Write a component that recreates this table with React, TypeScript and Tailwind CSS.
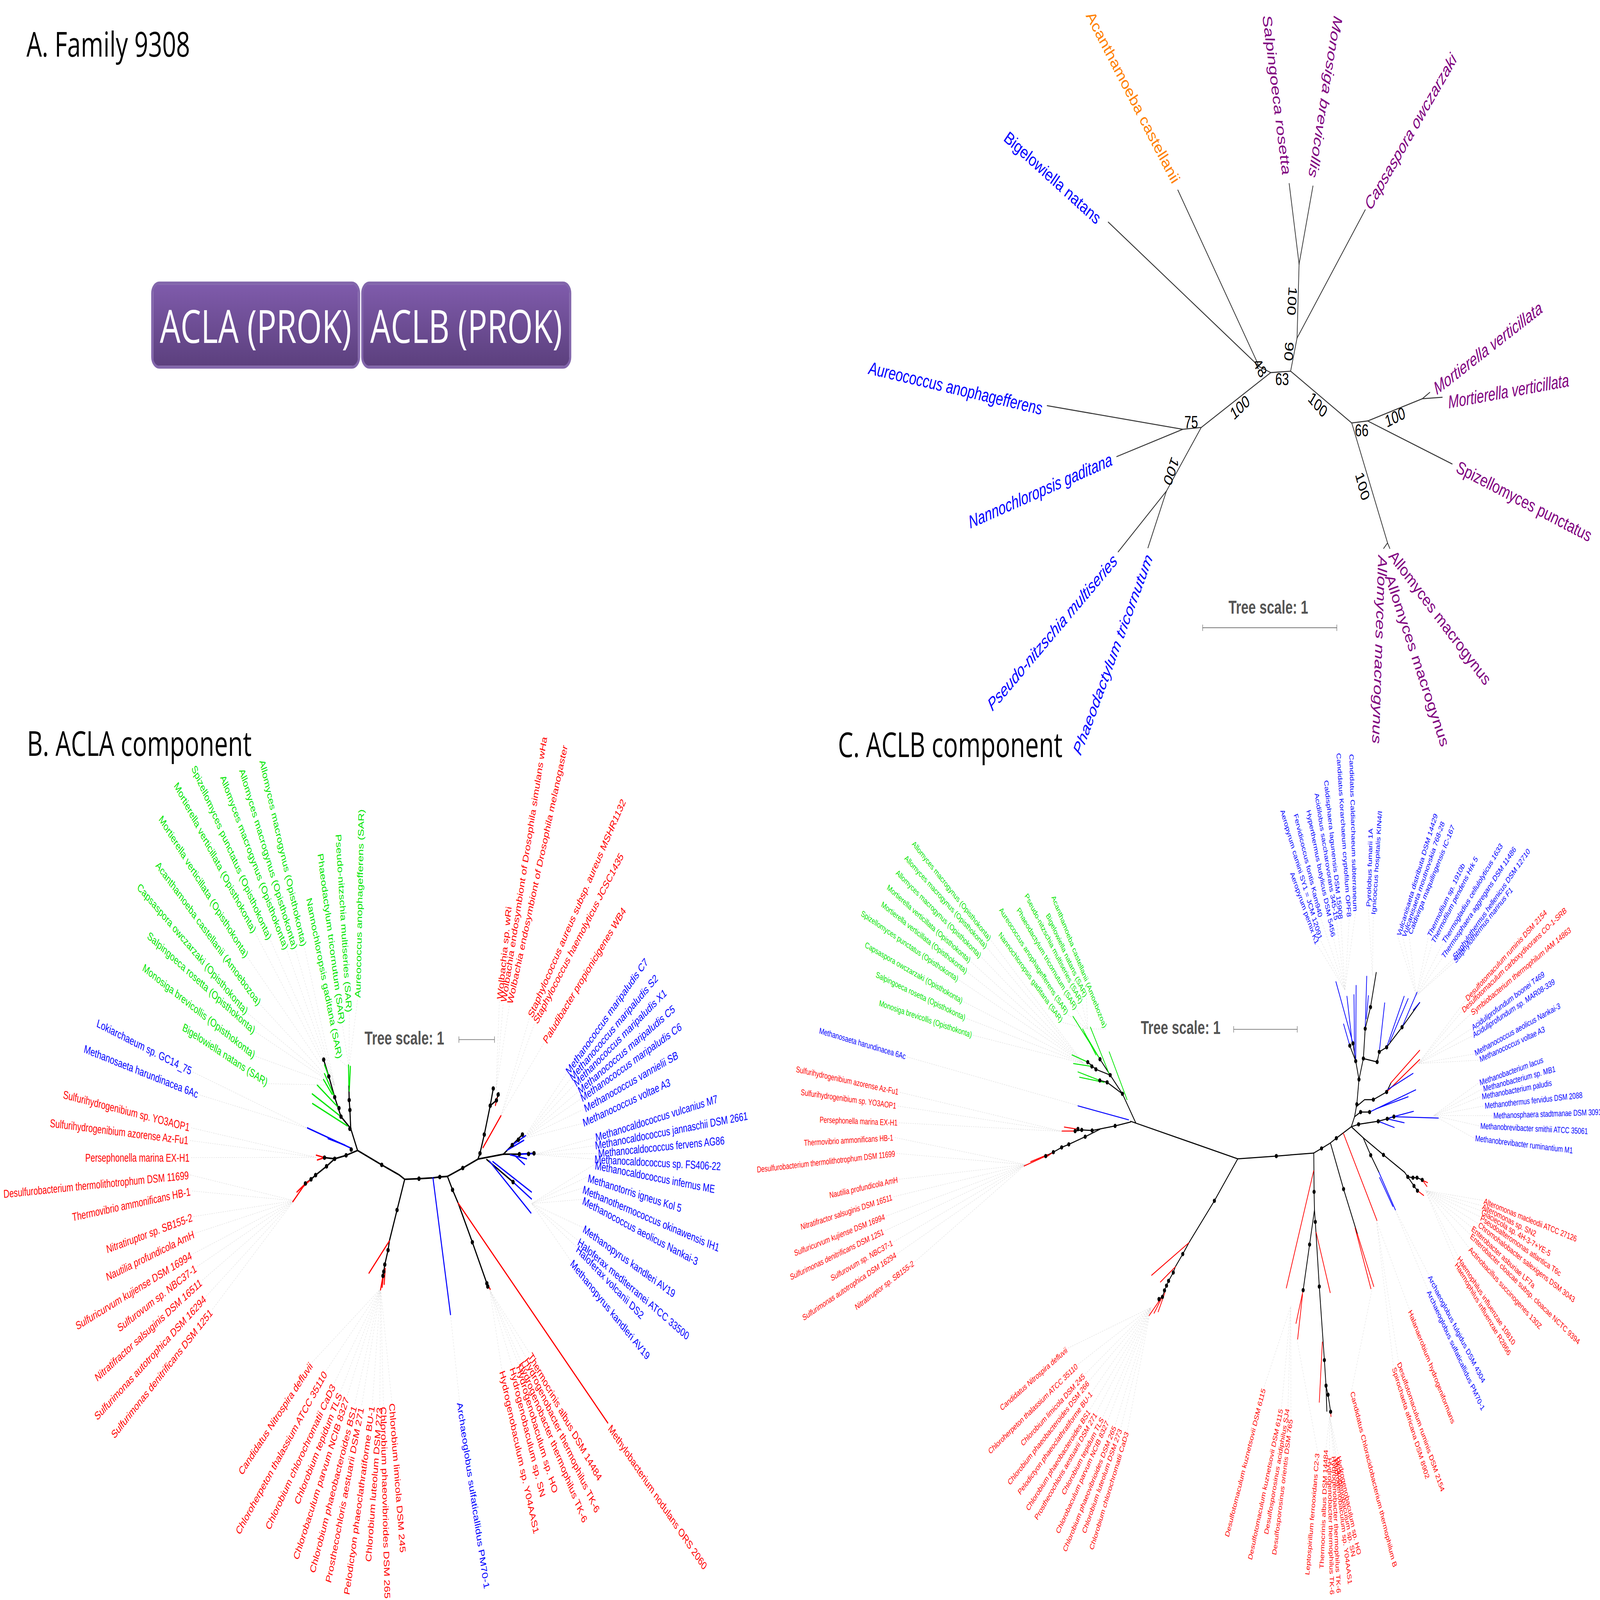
import React, { useEffect, useState } from "react";

// trees are drawn in the 1568 x 1109 units of the reduced figure
const S = 7016 / 1568;
const K = "#000000";
const RED = "#ff0000";
const BLUE = "#0000ff";
const GREEN = "#00e600";
const PURPLE = "#800080";
const ORANGE = "#ff7f00";

type Pt = [number, number];
type Edge = [Pt[], string];
type Lab = [string, number, number, number, "s" | "e", string, number];

const pts = (p: Pt[]) => p.map((q) => q.join(",")).join(" ");

function Edges({ edges, w, ink = K }: { edges: Edge[]; w: number; ink?: string }) {
  return (
    <g fill="none" strokeLinecap="round" strokeLinejoin="round">
      {edges.map(([p, c], i) => (
        <polyline key={i} points={pts(p)} stroke={c === K ? ink : c} strokeWidth={c === K ? w : w * 0.9} />
      ))}
    </g>
  );
}

function Dots({ dots, r }: { dots: Pt[]; r: number }) {
  return (
    <g fill="#000">
      {dots.map(([x, y], i) => (
        <circle key={i} cx={x} cy={y} r={r} />
      ))}
    </g>
  );
}

function Leaders({ items, hubs }: { items: Lab[]; hubs: Pt[] }) {
  return (
    <g stroke="#dadada" strokeWidth={0.3} strokeDasharray="1.2 1">
      {items.map(([, x, y, a, an, , h], i) => {
        if (h < 0) return null;
        const r = (a * Math.PI) / 180;
        const d = an === "e" ? 1.5 : -1.5;
        return <line key={i} x1={x + Math.cos(r) * d} y1={y + Math.sin(r) * d} x2={hubs[h][0]} y2={hubs[h][1]} />;
      })}
    </g>
  );
}

function Labels({ items, size, italic }: { items: Lab[]; size: number; italic?: boolean }) {
  return (
    <g>
      {items.map(([t, x, y, a, an, c], i) => (
        <text
          key={i}
          transform={`translate(${x} ${y}) rotate(${a})`}
          textAnchor={an === "e" ? "end" : "start"}
          dominantBaseline="central"
          fill={c}
          fontSize={size}
          fontStyle={italic ? "italic" : undefined}
        >
          {t}
        </text>
      ))}
    </g>
  );
}

function Scale({ tx, ty, x1, x2, y }: { tx: number; ty: number; x1: number; x2: number; y: number }) {
  return (
    <g>
      <text x={tx} y={ty} textAnchor="middle" dominantBaseline="central" fontSize={13} fontWeight={700} fill="#555">
        Tree scale: 1
      </text>
      <g stroke="#777" strokeWidth={0.5}>
        <line x1={x1} y1={y} x2={x2} y2={y} />
        <line x1={x1} y1={y - 2.2} x2={x1} y2={y + 2.2} />
        <line x1={x2} y1={y - 2.2} x2={x2} y2={y + 2.2} />
      </g>
    </g>
  );
}

/* ---------- panel A tree ---------- */

const topEdges: Edge[] = [
  [[[1086.1, 153.9], [1234, 254], [1245.3, 258.2]], K],
  [[[1154.3, 131.7], [1234, 254]], K],
  [[[1245.3, 258.2], [1264.8, 257.2]], K],
  [[[1263.4, 127.2], [1273.1, 183]], K],
  [[[1286.7, 128.9], [1273.1, 183]], K],
  [[[1273.1, 183], [1271.1, 234.3], [1264.8, 257.2]], K],
  [[[1337.9, 145.4], [1271.1, 234.3]], K],
  [[[1264.8, 257.2], [1324.7, 293.1], [1340.3, 291.7]], K],
  [[[1340.3, 291.7], [1393.9, 276.3], [1401.2, 271.9]], K],
  [[[1393.9, 276.3], [1413.4, 275.3]], K],
  [[[1340.3, 291.7], [1423.1, 321.5]], K],
  [[[1324.7, 293.1], [1359.8, 376.2]], K],
  [[[1359.8, 376.2], [1362, 380]], K],
  [[[1359.8, 376.2], [1356, 380]], K],
  [[[1245.3, 258.2], [1177.2, 296.2], [1159.1, 297.5]], K],
  [[[1026.2, 281.1], [1159.1, 297.5]], K],
  [[[1094.4, 316.4], [1159.1, 297.5]], K],
  [[[1177.2, 296.2], [1143.1, 340.3]], K],
  [[[1095.8, 382.4], [1143.1, 340.3]], K],
  [[[1125, 379.6], [1143.1, 340.3]], K],
];

const topLabels: Lab[] = [
  ["Acanthamoeba castellanii", 1152.8, 125.9, 54, "e", ORANGE, -1],
  ["Bigelowiella natans", 1077, 152.5, 32.8, "e", BLUE, -1],
  ["Salpingoeca rosetta", 1261, 121, 80, "e", PURPLE, -1],
  ["Monosiga brevicollis", 1286.5, 123, 102.6, "e", PURPLE, -1],
  ["Capsaspora owczarzaki", 1340, 143.6, -51, "s", PURPLE, -1],
  ["Mortierella verticillata", 1406, 270, -29, "s", PURPLE, -1],
  ["Mortierella verticillata", 1419.2, 278.7, -7.4, "s", PURPLE, -1],
  ["Spizellomyces punctatus", 1428, 323, 20.4, "s", PURPLE, -1],
  ["Allomyces macrogynus", 1363.7, 383, 43.4, "s", PURPLE, -1],
  ["Allomyces macrogynus", 1361.3, 398.4, 65, "s", PURPLE, -1],
  ["Allomyces macrogynus", 1355, 385, 92.6, "s", PURPLE, -1],
  ["Aureococcus anophagefferens", 1021.3, 283.2, 9.5, "e", BLUE, -1],
  ["Nannochloropsis gaditana", 1089.5, 318, -17.5, "e", BLUE, -1],
  ["Pseudo-nitzschia multiseries", 1092.9, 386.5, -40, "e", BLUE, -1],
  ["Phaeodactylum tricornutum", 1126, 384.8, -62.7, "e", BLUE, -1],
];

const boot: [string, number, number, number][] = [
  ["48", 1235, 254.8, 55],
  ["63", 1256.5, 262.7, 0],
  ["90", 1263.3, 243.5, 95],
  ["100", 1266.3, 208.6, 95],
  ["100", 1291.6, 280.4, 40],
  ["66", 1334.5, 298.2, 0],
  ["100", 1367.1, 289, -20],
  ["100", 1335.4, 336.9, 70],
  ["100", 1215.1, 282.2, -35],
  ["75", 1167.4, 292.4, 0],
  ["100", 1147.9, 326.6, 115],
];

/* ---------- panel B tree ---------- */

const bEdges: Edge[] = [
  [[[350.4, 797.2], [339.2, 800.6], [328, 803], [318, 802.2]], K],
  [[[318, 802.2], [310, 800.5]], RED],
  [[[318, 802.2], [311, 803.8]], RED],
  [[[328, 803], [320, 808.2], [309.3, 814.3], [304.8, 817.2], [299.3, 820.1]], K],
  [[[299.3, 820.1], [287, 832.7]], RED],
  [[[301, 819], [291, 826]], RED],
  [[[304.8, 817.2], [296, 823]], RED],
  [[[350.4, 797.2], [343.7, 782], [342.9, 769.2], [342.2, 762.3], [341.9, 752]], K],
  [[[341.9, 752], [341.5, 738]], GREEN],
  [[[342.3, 756], [343.4, 739]], GREEN],
  [[[343.7, 782], [334.2, 773.8], [328, 760.3], [322.2, 745.9], [317.2, 734.3]], K],
  [[[340.4, 780.2], [306.3, 764.7]], GREEN],
  [[[334.2, 773.8], [306, 758]], GREEN],
  [[[332.2, 767.9], [311, 752]], GREEN],
  [[[328, 760.3], [318, 744]], GREEN],
  [[[325.5, 758.3], [317, 748]], GREEN],
  [[[322.2, 745.9], [318, 738]], GREEN],
  [[[344.5, 795.8], [301.3, 781.6]], BLUE],
  [[[338, 793.5], [321.5, 789]], BLUE],
  [[[350.4, 797.2], [374.1, 807.2], [391.1, 814.1], [396.6, 817.2], [410.6, 816.8], [424.3, 816.2], [431, 815.6], [438.5, 815.2], [453.5, 809.4], [468.4, 803.2]], K],
  [[[396.6, 817.2], [389.1, 838.5], [381.6, 859.9], [380.3, 866.3], [377.1, 876.3], [376.1, 881.2], [375.3, 884.1]], K],
  [[[375.3, 884.1], [372.9, 893.8]], RED],
  [[[376, 882], [374.5, 892]], RED],
  [[[377.5, 879], [376.5, 890]], RED],
  [[[381.6, 859.9], [361.6, 882.2]], RED],
  [[[424.3, 816.2], [441.5, 910.9]], BLUE],
  [[[438.5, 815.2], [443.5, 824.5], [449, 833.7], [462.9, 860.8], [477.1, 889.3]], K],
  [[[477.1, 889.3], [480.4, 893.4]], RED],
  [[[449, 833.7], [595.6, 986]], RED],
  [[[468.4, 803.2], [470.4, 799.2], [474.6, 786.2], [480.4, 766.2], [483.4, 754.3]], K],
  [[[480.4, 766.2], [486.5, 762.5], [488.8, 757.3]], K],
  [[[487, 761], [485.5, 766]], RED],
  [[[473.4, 795.2], [490.9, 773.2]], RED],
  [[[468.4, 803.2], [493.4, 799.8]], K],
  [[[493.4, 799.8], [502, 793.5], [512, 786.2]], K],
  [[[497, 797], [513.3, 790.2]], BLUE],
  [[[502, 793.5], [515, 787]], BLUE],
  [[[493.4, 799.8], [509, 799.8], [523.3, 799.2]], K],
  [[[500, 800.2], [516, 803]], BLUE],
  [[[509, 799.8], [524.5, 799.3]], BLUE],
  [[[505, 801], [514, 807]], BLUE],
  [[[477, 803.5], [502.8, 819.1]], K],
  [[[483, 805], [520.8, 826]], BLUE],
  [[[502.8, 819.1], [520.8, 830.8]], BLUE],
  [[[479.6, 804.6], [520.3, 840.5]], BLUE],
];

const bDots: Pt[] = [
  [374.1, 807.2], [410.6, 816.8], [431, 815.6], [453.5, 809.4], [389.1, 838.5], [380.3, 866.3], [377.1, 876.3],
  [376.1, 881.2], [375.3, 884.1], [443.5, 824.5], [462.9, 860.8], [477.1, 889.3], [478, 891.5], [470.4, 799.2],
  [474.6, 786.2], [480.4, 766.2], [483.4, 754.3], [486.5, 762.5], [488.2, 758.5], [502, 793.5], [508, 789.8],
  [512, 786.2], [509, 799.8], [518, 799.6], [523.3, 799.2], [502.8, 819.1], [339.2, 800.6], [328, 803],
  [318, 802.2], [320, 808.2], [309.3, 814.3], [304.8, 817.2], [299.3, 820.1], [344.2, 796.6], [342.9, 782.2],
  [342.9, 769.2], [342.2, 762.3], [334.2, 773.8], [328, 760.3], [322.2, 745.9], [317.2, 734.3], [332.2, 767.9],
];

const bHubs: Pt[] = [
  [328, 752], [342, 740], [302, 782], [310, 802], [288, 832], [373, 893], [441.5, 911], [480, 894], [0, 0],
  [521, 834], [486, 756], [491, 773], [513, 789], [524, 800],
];

const bLabels: Lab[] = [
  ["Allomyces macrogynus (Opisthokonta)", 298, 655.5, 72.3, "e", GREEN, 0],
  ["Allomyces macrogynus (Opisthokonta)", 289.3, 657.5, 67.2, "e", GREEN, 0],
  ["Allomyces macrogynus (Opisthokonta)", 280.6, 657.5, 62.5, "e", GREEN, 0],
  ["Spizellomyces punctatus (Opisthokonta)", 264.4, 650.5, 58, "e", GREEN, 0],
  ["Mortierella verticillata (Opisthokonta)", 249.4, 645.5, 53.1, "e", GREEN, 0],
  ["Mortierella verticillata (Opisthokonta)", 241.9, 662.5, 48.7, "e", GREEN, 0],
  ["Acanthamoeba castellanii (Amoebozoa)", 254.4, 695.4, 44.1, "e", GREEN, 0],
  ["Capsaspora owczarzaki (Opisthokonta)", 241.9, 701.4, 39.6, "e", GREEN, 0],
  ["Salpingoeca rosetta (Opisthokonta)", 249.4, 714.4, 32.7, "e", GREEN, 0],
  ["Monosiga brevicollis (Opisthokonta)", 249.4, 731.3, 29.4, "e", GREEN, 0],
  ["Bigelowiella natans (SAR)", 261.9, 750.3, 25.3, "e", GREEN, 0],
  ["Nannochloropsis gaditana (SAR)", 333, 733.3, 74.8, "e", GREEN, 1],
  ["Phaeodactylum tricornutum (SAR)", 335.4, 709.4, 79.7, "e", GREEN, 1],
  ["Pseudo-nitzschia multiseries (SAR)", 342.2, 701.4, 85.1, "e", GREEN, 1],
  ["Aureococcus anophagefferens (SAR)", 350.4, 691.4, -88.4, "s", GREEN, 1],
  ["Lokiarchaeum sp. GC14_75", 187.5, 742.3, 20, "e", BLUE, 2],
  ["Methanosaeta harundinacea 6Ac", 194, 758.3, 15.9, "e", BLUE, 2],
  ["Sulfurihydrogenibium sp. YO3AOP1", 185.8, 781.2, 10.5, "e", RED, 3],
  ["Sulfurihydrogenibium azorense Az-Fu1", 184.6, 790.2, 5.1, "e", RED, 3],
  ["Persephonella marina EX-H1", 185.8, 802.2, 0, "e", RED, 3],
  ["Desulfurobacterium thermolithotrophum DSM 11699", 185, 814.3, -4.1, "e", RED, 4],
  ["Thermovibrio ammonificans HB-1", 186.6, 825.5, -8.8, "e", RED, 4],
  ["Nitratiruptor sp. SB155-2", 188.3, 843.4, -14.9, "e", RED, 4],
  ["Nautilia profundicola AmH", 190, 855, -19.3, "e", RED, 4],
  ["Sulfuricurvum kujiense DSM 16994", 187.5, 869.6, -23.7, "e", RED, 4],
  ["Sulfurovum sp. NBC37-1", 192, 878.3, -29.1, "e", RED, 4],
  ["Nitratifractor salsuginis DSM 16511", 197, 888, -33.1, "e", RED, 4],
  ["Sulfurimonas autotrophica DSM 16294", 200.8, 899.2, -37.8, "e", RED, 4],
  ["Sulfurimonas denitrificans DSM 1251", 207, 908.4, -41.9, "e", RED, 4],
  ["Candidatus Nitrospira defluvii", 304.8, 945.2, -47.4, "e", RED, 5],
  ["Chloroherpeton thalassium ATCC 35110", 318.7, 951, -52.3, "e", RED, 5],
  ["Chlorobium chlorochromatii CaD3", 326.7, 959.8, -57, "e", RED, 5],
  ["Chlorobium tepidum TLS", 333, 965.6, -61, "e", RED, 5],
  ["Chlorobaculum parvum NCIB 8327", 339.7, 968.5, -65.9, "e", RED, 5],
  ["Chlorobium phaeobacteroides BS1", 347.2, 974.3, -70.3, "e", RED, 5],
  ["Prosthecochloris aestuarii DSM 271", 354.1, 975.3, -75, "e", RED, 5],
  ["Pelodictyon phaeoclathratiforme BU-1", 364.6, 974.3, -79.2, "e", RED, 5],
  ["Chlorobium luteolum DSM 273", 372.1, 975.3, -84, "e", RED, 5],
  ["Chlorobium phaeovibrioides DSM 265", 375.8, 974.8, 88.3, "s", RED, 5],
  ["Chlorobium limicola DSM 245", 384.1, 972.4, 84, "s", RED, 5],
  ["Archaeoglobus sulfaticallidus PM70-1", 450.5, 971.8, 78.3, "s", BLUE, 6],
  ["Thermocrinis albus DSM 14484", 519.5, 938.4, 51.6, "s", RED, 7],
  ["Hydrogenobacter thermophilus TK-6", 515.8, 941.3, 56.6, "s", RED, 7],
  ["Hydrogenobacter thermophilus TK-6", 510.8, 943.9, 60.4, "s", RED, 7],
  ["Hydrogenobaculum sp. HO", 508.3, 946.2, 67.7, "s", RED, 7],
  ["Hydrogenobaculum sp. SN", 502.1, 947.7, 71.4, "s", RED, 7],
  ["Hydrogenobaculum sp. Y04AAS1", 492.1, 950, 73.3, "s", RED, 7],
  ["Methylobacterium nodulans ORS 2060", 597.6, 988.5, 46.2, "s", RED, -1],
  ["Methanocaldococcus infernus ME", 583.1, 807.5, 8, "s", BLUE, 9],
  ["Methanotorris igneus Kol 5", 576.2, 816.2, 13, "s", BLUE, 9],
  ["Methanothermococcus okinawensis IH1", 571.2, 824, 17, "s", BLUE, 9],
  ["Methanococcus aeolicus Nankai-3", 571.2, 831.7, 20.8, "s", BLUE, 9],
  ["Methanopyrus kandleri AV19", 571.9, 851.1, 27.2, "s", BLUE, 9],
  ["Haloferax mediterranei ATCC 33500", 566.9, 859.9, 31.7, "s", BLUE, 9],
  ["Haloferax volcanii DS2", 565.7, 864.7, 36.6, "s", BLUE, 9],
  ["Methanopyrus kandleri AV19", 560.2, 874.4, 41.3, "s", BLUE, 9],
  ["Wolbachia sp. wRi", 489.6, 692.4, -82, "s", RED, 10],
  ["Wolbachia endosymbiont of Drosophila simulans wHa", 493.4, 694.4, -77.7, "s", RED, 10],
  ["Wolbachia endosymbiont of Drosophila melanogaster", 499.6, 695.4, -73.2, "s", RED, 10],
  ["Staphylococcus aureus subsp. aureus MSHR1132", 519.5, 704.4, -58.6, "s", RED, 11],
  ["Staphylococcus haemolyticus JCSC1435", 524.5, 708.4, -54, "s", RED, 11],
  ["Paludibacter propionicigenes WB4", 533.8, 721.9, -49.8, "s", RED, 11],
  ["Methanococcus maripaludis C7", 555.7, 743.3, -45.1, "s", BLUE, 12],
  ["Methanococcus maripaludis S2", 559.4, 747.3, -40, "s", BLUE, 12],
  ["Methanococcus maripaludis X1", 563.2, 751.3, -35.9, "s", BLUE, 12],
  ["Methanococcus maripaludis C5", 566.9, 756.3, -31.8, "s", BLUE, 12],
  ["Methanococcus maripaludis C6", 569.4, 761.3, -27.3, "s", BLUE, 12],
  ["Methanococcus vannielii SB", 572.7, 768.3, -22.4, "s", BLUE, 12],
  ["Methanococcus voltae A3", 571.2, 778.2, -18.5, "s", BLUE, 12],
  ["Methanocaldococcus vulcanius M7", 583.6, 788.2, -12.7, "s", BLUE, 13],
  ["Methanocaldococcus jannaschii DSM 2661", 583.1, 793.8, -7.9, "s", BLUE, 13],
  ["Methanocaldococcus fervens AG86", 586.1, 799.2, -4.2, "s", BLUE, 13],
  ["Methanocaldococcus sp. FS406-22", 582.6, 803.2, 2.3, "s", BLUE, 13],
];

/* ---------- panel C tree ---------- */

const cEdges: Edge[] = [
  [[[1113, 778], [1100, 758], [1088, 745], [1078, 734]], K],
  [[[1078, 734], [1051.5, 704.3]], GREEN],
  [[[1087.4, 744.9], [1068.6, 711.8]], GREEN],
  [[[1104.5, 762], [1087, 728.9]], GREEN],
  [[[1088, 745], [1074, 741], [1066, 736]], K],
  [[[1066, 736], [1050.6, 731]], GREEN],
  [[[1070, 739], [1052, 737]], GREEN],
  [[[1100, 758], [1085, 750], [1077.8, 748.7]], K],
  [[[1077.8, 748.7], [1056.4, 742.8]], GREEN],
  [[[1082, 750], [1058, 746.5]], GREEN],
  [[[1078, 734], [1063, 716]], GREEN],
  [[[1074, 731], [1061, 713]], GREEN],
  [[[1106, 776], [1056.4, 766.3]], BLUE],
  [[[1108, 777.5], [1092.8, 780.2], [1070.3, 783.4], [1060.1, 783], [1053.6, 783.8]], K],
  [[[1053.6, 783.8], [1040.8, 783.8]], RED],
  [[[1056, 782.5], [1043, 781]], RED],
  [[[1078, 782.5], [1063.5, 787.7], [1047.4, 793], [1040.4, 795.1], [1032.3, 798.4], [1024.8, 801.1]], K],
  [[[1024.8, 801.1], [1003.6, 808]], RED],
  [[[1027, 800], [1010, 805]], RED],
  [[[1033, 798], [1026, 801.5]], RED],
  [[[1108, 777], [1213, 803], [1250.8, 801.1], [1287.5, 799]], K],
  [[[1213, 803], [1190.1, 832.1], [1165.1, 861.2], [1159.1, 869], [1151.8, 877.9], [1149.8, 881.8], [1145.2, 887.6], [1143.2, 890.9], [1141.2, 894.2], [1139.2, 898.7], [1135.8, 900.2], [1135.2, 901.6]], K],
  [[[1165.1, 861.2], [1128.6, 883.7]], RED],
  [[[1151.8, 877.9], [1137.2, 888.4]], RED],
  [[[1137, 900.5], [1126.2, 911.6]], RED],
  [[[1139.5, 898], [1131, 910]], RED],
  [[[1141.5, 896], [1135, 909]], RED],
  [[[1287.5, 799], [1295.1, 795.8], [1303.8, 792], [1309.6, 788.7], [1324.3, 780.8]], K],
  [[[1303.8, 792], [1316.7, 824], [1330.2, 855]], K],
  [[[1330.2, 855], [1346.3, 891.5]], RED],
  [[[1328, 851], [1343.5, 893]], RED],
  [[[1316.5, 785.3], [1349.4, 845.7]], RED],
  [[[1287.5, 799], [1287.8, 825.9], [1288.2, 838.4], [1289, 846.7]], K],
  [[[1287.4, 811.3], [1260.6, 892.5]], RED],
  [[[1288.2, 838.4], [1283.4, 862.4], [1277.1, 894]], K],
  [[[1277.1, 894], [1270.1, 917]], RED],
  [[[1276.5, 897], [1271.7, 927.9]], RED],
  [[[1289, 846.7], [1292.9, 891.5], [1297.9, 942.5], [1299.5, 960.2], [1300.3, 977.9]], K],
  [[[1299.5, 960.2], [1301.5, 966.5], [1304, 978.3]], K],
  [[[1304, 978.3], [1304.4, 981.6]], RED],
  [[[1289.8, 854], [1303.6, 895.7]], RED],
  [[[1295.9, 930], [1292.9, 971.7]], RED],
  [[[1324.3, 780.8], [1335.9, 788.4], [1343.3, 800.5], [1351.4, 812.4]], K],
  [[[1351.4, 812.4], [1367.5, 838.4]], BLUE],
  [[[1352, 816], [1365, 836]], BLUE],
  [[[1335.9, 788.4], [1355.8, 800.3], [1376.6, 812.4], [1379.6, 815.5], [1384.7, 816.1], [1388.7, 816.1], [1393.8, 817.6]], K],
  [[[1393.8, 817.6], [1398.4, 822.2]], RED],
  [[[1394.4, 818], [1399, 819.5]], RED],
  [[[1379.6, 815.5], [1385.7, 821.8], [1389.1, 825.1]], K],
  [[[1389.1, 825.1], [1395.2, 828.4]], RED],
  [[[1324.3, 780.8], [1327.5, 773.8], [1329.7, 765.2], [1331.8, 748], [1336.1, 733.5], [1337.9, 712.8], [1343.1, 697.9], [1348.7, 673.9]], K],
  [[[1337.9, 712.8], [1339.4, 676.5]], BLUE],
  [[[1339, 706], [1341, 690]], BLUE],
  [[[1331.8, 748], [1328.6, 735.3], [1325.9, 723]], K],
  [[[1328.6, 735.3], [1322.8, 724.6]], K],
  [[[1325.9, 723], [1309.2, 680.3]], BLUE],
  [[[1325, 722], [1320, 690.4]], BLUE],
  [[[1328.6, 735.3], [1329, 682.9]], BLUE],
  [[[1327.5, 731], [1326.9, 689.3]], BLUE],
  [[[1322.8, 724.6], [1316.7, 709.6]], BLUE],
  [[[1336.1, 733.5], [1349.6, 735.9], [1351.7, 728.9], [1358.9, 725.7], [1374, 711.8], [1391.3, 694.7]], K],
  [[[1352, 727], [1357, 695]], BLUE],
  [[[1358.9, 725.7], [1376.1, 690.4]], BLUE],
  [[[1362, 722], [1380, 692]], BLUE],
  [[[1374, 711.8], [1388.7, 687.6]], BLUE],
  [[[1385, 700], [1391.3, 694.7]], BLUE],
  [[[1329, 767], [1337.3, 762], [1345.9, 762], [1358.9, 756.7], [1363.2, 750.3]], K],
  [[[1363.2, 750.3], [1391.3, 727.8]], RED],
  [[[1358.9, 756.7], [1391.3, 734.2]], RED],
  [[[1360, 755], [1384.8, 743.8]], BLUE],
  [[[1327.5, 773.8], [1333.4, 770.6], [1342.2, 770.6]], K],
  [[[1342.2, 770.6], [1387.4, 755.2]], BLUE],
  [[[1348, 768.5], [1380, 760]], BLUE],
  [[[1324.3, 780.8], [1331.4, 779.1], [1350.7, 777], [1359.5, 775.3], [1366, 773.8]], K],
  [[[1366, 773.8], [1409.6, 774.8]], BLUE],
  [[[1362, 774.5], [1385.2, 770.1]], BLUE],
  [[[1350.7, 777], [1366.4, 781.3]], BLUE],
  [[[1359.5, 775.3], [1376.1, 778]], BLUE],
];

const cDots: Pt[] = [
  [1092.8, 780.2], [1070.3, 783.4], [1060.1, 783], [1056.4, 782.3], [1053.6, 783.8], [1063.5, 787.7], [1047.4, 793],
  [1040.4, 795.1], [1032.3, 798.4], [1024.8, 801.1], [1066, 736], [1070, 739], [1074, 741], [1078, 734],
  [1088, 745], [1085, 750], [1077.8, 748.7], [1100, 758], [1250.8, 801.1], [1190.1, 832.1], [1159.1, 869],
  [1149.8, 881.8], [1145.2, 887.6], [1143.2, 890.9], [1141.2, 894.2], [1139.2, 898.7], [1135.8, 900.2],
  [1295.1, 795.8], [1309.6, 788.7], [1316.7, 824], [1287.8, 825.9], [1289, 846.7], [1283.4, 862.4], [1277.1, 894],
  [1292.9, 891.5], [1297.9, 942.5], [1299.5, 960.2], [1301.5, 966.5], [1304, 978.3], [1343.3, 800.5],
  [1355.8, 800.3], [1379.6, 815.5], [1384.7, 816.1], [1388.7, 816.1], [1393.8, 817.6], [1385.7, 821.8],
  [1389.1, 825.1], [1329.7, 765.2], [1331.8, 748], [1328.6, 735.3], [1325.9, 723], [1322.8, 724.6], [1336.1, 733.5],
  [1337.9, 712.8], [1343.1, 697.9], [1349.6, 735.9], [1351.7, 728.9], [1358.9, 725.7], [1374, 711.8],
  [1345.9, 762], [1358.9, 756.7], [1333.4, 770.6], [1342.2, 770.6], [1331.4, 779.1], [1350.7, 777],
  [1359.5, 775.3], [1366, 773.8],
];

const cHubs: Pt[] = [
  [1062, 737], [1056, 766], [1066, 713], [1041, 784], [1005, 807], [1128, 906], [1265, 905], [1271, 928],
  [1303, 981], [1345, 892], [1349, 846], [1349, 846], [1367, 838], [1397, 825], [1405, 773], [1390, 737],
  [1388, 690], [1345, 676], [1318, 686],
];

const cLabels: Lab[] = [
  ["Allomyces macrogynus (Opisthokonta)", 970.3, 650.8, 41.6, "e", GREEN, 0],
  ["Allomyces macrogynus (Opisthokonta)", 966.6, 656.2, 38.2, "e", GREEN, 0],
  ["Allomyces macrogynus (Opisthokonta)", 960.9, 662.6, 35.5, "e", GREEN, 0],
  ["Mortierella verticillata (Opisthokonta)", 950.6, 665.8, 32.5, "e", GREEN, 0],
  ["Mortierella verticillata (Opisthokonta)", 947.4, 673.3, 29.5, "e", GREEN, 0],
  ["Spizellomyces punctatus (Opisthokonta)", 938.8, 678.6, 26, "e", GREEN, 0],
  ["Capsaspora owczarzaki (Opisthokonta)", 943.1, 693.6, 22.4, "e", GREEN, 0],
  ["Salpingoeca rosetta (Opisthokonta)", 945.9, 705.3, 19.1, "e", GREEN, 0],
  ["Monosiga brevicollis (Opisthokonta)", 952.3, 717.1, 13.7, "e", GREEN, 0],
  ["Methanosaeta harundinacea 6Ac", 887.5, 732.1, 12, "e", BLUE, 1],
  ["Acanthamoeba castellanii (Amoebozoa)", 1083.1, 711.8, 60.7, "e", GREEN, 2],
  ["Bigelowiella natans (SAR)", 1063.9, 690.4, 56.8, "e", GREEN, 2],
  ["Pseudo-nitzschia multiseries (SAR)", 1059.6, 694.7, 54.2, "e", GREEN, 2],
  ["Phaeodactylum tricornutum (SAR)", 1054.3, 698.9, 50.7, "e", GREEN, 2],
  ["Aureococcus anophagefferens (SAR)", 1045.7, 702.1, 48, "e", GREEN, 2],
  ["Nannochloropsis gaditana (SAR)", 1040.4, 707.5, 45, "e", GREEN, 2],
  ["Sulfurihydrogenibium azorense Az-Fu1", 880.5, 756.7, 9, "e", RED, 3],
  ["Sulfurihydrogenibium sp. YO3AOP1", 878.3, 766.3, 5.8, "e", RED, 3],
  ["Persephonella marina EX-H1", 879.6, 778, 1.6, "e", RED, 3],
  ["Thermovibrio ammonificans HB-1", 875.3, 788.3, -2.4, "e", RED, 4],
  ["Desulfurobacterium thermolithotrophum DSM 11699", 877.2, 799.4, -4.7, "e", RED, 4],
  ["Nautilia profundicola AmH", 879.8, 817.4, -9.2, "e", RED, 4],
  ["Nitratifractor salsuginis DSM 16511", 874.3, 829.6, -13, "e", RED, 4],
  ["Sulfuricurvum kujiense DSM 16994", 867, 843.1, -16, "e", RED, 4],
  ["Sulfurimonas denitrificans DSM 1251", 866, 853.3, -19.2, "e", RED, 4],
  ["Sulfurovum sp. NBC37-1", 874.6, 861, -22.5, "e", RED, 4],
  ["Sulfurimonas autotrophica DSM 16294", 877.9, 869.4, -25.8, "e", RED, 4],
  ["Nitratiruptor sp. SB155-2", 895.2, 875.1, -28.7, "e", RED, 4],
  ["Candidatus Nitrospira defluvii", 1045.4, 935, -32.4, "e", RED, 5],
  ["Chloroherpeton thalassium ATCC 35110", 1055.4, 946.2, -34.9, "e", RED, 5],
  ["Chlorobium limicola DSM 245", 1062.4, 953, -38, "e", RED, 5],
  ["Chlorobium phaeobacteroides DSM 266", 1066.4, 957.8, -42, "e", RED, 5],
  ["Pelodictyon phaeoclathratiforme BU-1", 1069.4, 965.2, -44.5, "e", RED, 5],
  ["Chlorobium phaeobacteroides BS1", 1067.4, 977.6, -48.4, "e", RED, 5],
  ["Prosthecochloris aestuarii DSM 271", 1073.9, 979.5, -51.2, "e", RED, 5],
  ["Chlorobium tepidum TLS", 1080.3, 982.7, -53.8, "e", RED, 5],
  ["Chlorobaculum parvum NCIB 8327", 1085.3, 985, -57.6, "e", RED, 5],
  ["Chlorobium phaeovibrioides DSM 265", 1092.3, 988.5, -60.4, "e", RED, 5],
  ["Chlorobium luteolum DSM 273", 1097.9, 990.4, -63.5, "e", RED, 5],
  ["Chlorobium chlorochromatii CaD3", 1104.3, 992.4, -66.8, "e", RED, 5],
  ["Desulfotomaculum kuznetsovii DSM 6115", 1238.4, 962.3, -70.6, "e", RED, 6],
  ["Desulfotomaculum kuznetsovii DSM 6115", 1255.5, 976.4, -73.7, "e", RED, 6],
  ["Desulfosporosinus acidiphilus SJ4", 1261.9, 976.2, -76.4, "e", RED, 6],
  ["Desulfosporosinus orientis DSM 765", 1264.9, 983.5, -80.2, "e", RED, 6],
  ["Leptospirillum ferrooxidans C2-3", 1291, 1007.1, -83.3, "e", RED, 7],
  ["Thermocrinis albus DSM 14484", 1299.5, 1004.6, -87, "e", RED, 8],
  ["Hydrogenobacter thermophilus TK-6", 1303, 1010.2, 88.5, "s", RED, 8],
  ["Hydrogenobacter thermophilus TK-6", 1307, 1009.1, 87, "s", RED, 8],
  ["Hydrogenobaculum sp. Y04AAS1", 1309, 1011.2, 80.7, "s", RED, 8],
  ["Hydrogenobaculum sp. SN", 1310, 1010.2, 76.4, "s", RED, 8],
  ["Hydrogenobaculum sp. HO", 1312, 1009.1, 73.6, "s", RED, 8],
  ["Candidatus Chloracidobacterium thermophilum B", 1325.2, 964.4, 70.9, "s", RED, 9],
  ["Desulfotomaculum ruminis DSM 2154", 1371, 944.2, 64.2, "s", RED, 10],
  ["Spirochaeta africana DSM 8902", 1366.1, 947.7, 66.7, "s", RED, 10],
  ["Halanaerobium hydrogeniformans", 1381.7, 908.2, 61.3, "s", RED, 11],
  ["Archaeoglobus fulgidus DSM 4304", 1400.8, 884.2, 54, "s", BLUE, 12],
  ["Archaeoglobus sulfaticallidus PM70-1", 1399.8, 894.6, 56.8, "s", BLUE, 12],
  ["Haemophilus influenzae 10810", 1429.5, 871.3, 47.7, "s", RED, 13],
  ["Haemophilus influenzae R2866", 1427.1, 875.5, 50.2, "s", RED, 13],
  ["Actinobacillus succinogenes 130Z", 1440.2, 865.1, 38.1, "s", RED, 13],
  ["Enterobacter cloacae subsp. cloacae NCTC 9394", 1441.6, 856.1, 35, "s", RED, 13],
  ["Enterobacter asburiae LF7a", 1442.8, 850.9, 33.6, "s", RED, 13],
  ["Chromohalobacter salexigens DSM 3043", 1449.3, 848.4, 29.3, "s", RED, 13],
  ["Pseudoalteromonas atlantica T6c", 1451.3, 843.6, 26.6, "s", RED, 13],
  ["Glaciecola sp. 4H-3-7+YE-5", 1452.3, 839.5, 23.7, "s", RED, 13],
  ["Alteromonas sp. SN2", 1452.9, 835.9, 20.3, "s", RED, 13],
  ["Alteromonas macleodii ATCC 27126", 1454.3, 832.2, 16.2, "s", RED, 13],
  ["Methanobrevibacter ruminantium M1", 1445.7, 788.7, 5.1, "s", BLUE, 14],
  ["Methanobrevibacter smithii ATCC 35061", 1450.7, 780.2, 2, "s", BLUE, 14],
  ["Methanosphaera stadtmanae DSM 3091", 1463.5, 773.1, -1.4, "s", BLUE, 14],
  ["Methanothermus fervidus DSM 2088", 1455, 766.3, -4.5, "s", BLUE, 14],
  ["Methanobacterium paludis", 1452.2, 759.9, -8, "s", BLUE, 14],
  ["Methanobacterium sp. MB1", 1453.5, 754.5, -11.1, "s", BLUE, 14],
  ["Methanobacterium lacus", 1450, 750.3, -14.5, "s", BLUE, 14],
  ["Methanococcus voltae A3", 1450, 734.2, -18.4, "s", BLUE, 15],
  ["Methanococcus aeolicus Nankai-3", 1445.3, 729.9, -21.7, "s", BLUE, 15],
  ["Aciduliprofundum sp. MAR08-339", 1443.6, 717.5, -25.3, "s", BLUE, 15],
  ["Aciduliprofundum boonei T469", 1442.7, 712.4, -28.2, "s", BLUE, 15],
  ["Symbiobacterium thermophilum IAM 14863", 1442.1, 702.1, -31, "s", RED, 15],
  ["Desulfotomaculum carboxydivorans CO-1-SRB", 1433.4, 700.4, -34.8, "s", RED, 15],
  ["Desulfotomaculum ruminis DSM 2154", 1437.1, 692.5, -38, "s", RED, 15],
  ["Staphylothermus marinus F1", 1425.4, 666.2, -42, "s", BLUE, 16],
  ["Staphylothermus hellenicus DSM 12710", 1424.8, 663.7, -45.5, "s", BLUE, 16],
  ["Thermosphaera aggregans DSM 11486", 1414, 663.2, -47, "s", BLUE, 16],
  ["Thermogladius cellulolyticus 1633", 1414.6, 653, -50.1, "s", BLUE, 16],
  ["Thermofilum pendens Hrk 5", 1404.2, 653, -54.1, "s", BLUE, 16],
  ["Thermofilum sp. 1910b", 1400.4, 648.7, -56.1, "s", BLUE, 16],
  ["Caldivirga maquilingensis IC-167", 1381.6, 647, -60.5, "s", BLUE, 16],
  ["Vulcanisaeta moutnovskia 768-28", 1375.7, 649.1, -64.3, "s", BLUE, 16],
  ["Vulcanisaeta distributa DSM 14429", 1370.7, 648.3, -66.6, "s", BLUE, 16],
  ["Ignicoccus hospitalis KIN4/I", 1345.9, 633.7, -84.8, "s", BLUE, 17],
  ["Pyrolobus fumarii 1A", 1341.1, 628.4, -87.7, "s", BLUE, 17],
  ["Candidatus Caldiarchaeum subterraneum", 1328.2, 631.6, 88, "e", BLUE, 18],
  ["Candidatus Korarchaeum cryptofilum OPF8", 1322.1, 635.4, 84.8, "e", BLUE, 18],
  ["Caldisphaera lagunensis DSM 15908", 1313.9, 636.9, 81.5, "e", BLUE, 18],
  ["Acidilobus saccharovorans 345-15", 1309.6, 637.6, 77.6, "e", BLUE, 18],
  ["Hyperthermus butylicus DSM 5456", 1306.6, 649.1, 74.5, "e", BLUE, 18],
  ["Fervidicoccus fontis Kam940", 1294, 635.4, 71.2, "e", BLUE, 18],
  ["Aeropyrum camini SY1 = JCM 12091", 1294, 650.8, 67.3, "e", BLUE, 18],
  ["Aeropyrum pernix K1", 1290.8, 654, 63.4, "e", BLUE, 18],
];

/* ---------- page ---------- */

function Domain({ label, wide }: { label: string; wide?: boolean }) {
  return (
    <div
      className={`flex h-[270px] items-center justify-center rounded-[36px] border-[9px] border-[#8266ab] bg-linear-to-b from-[#7f5bab] to-[#5c407e] text-[143px] leading-none text-white ${
        wide ? "w-[921px]" : "w-[916px]"
      }`}
    >
      {label}
    </div>
  );
}

const vbW = 3508 / S;
const vbH = 4961 / S;

// the figure is laid out at 7016 x 4961; if the window comes out smaller, fit it to the window
function fitScale(): [number, number] {
  if (typeof window === "undefined") return [1, 1];
  return [Math.min(1, window.innerWidth / 7016), Math.min(1, window.innerHeight / 4961)];
}

export default function App() {
  const [[sx, sy], setFit] = useState<[number, number]>(fitScale);

  useEffect(() => {
    const onResize = () => setFit(fitScale());
    window.addEventListener("resize", onResize);
    return () => window.removeEventListener("resize", onResize);
  }, []);

  return (
    <div className="h-screen w-screen overflow-hidden bg-white">
      <div
        className="h-[4961px] w-[7016px] origin-top-left overflow-hidden bg-white"
        style={{ transform: `scale(${sx}, ${sy})` }}
      >
        <div className="grid h-[4961px] w-[7016px] grid-cols-[3508px_3508px] font-['Open_Sans',sans-serif] text-black">
          {/* left column: family A, ACLA tree */}
          <div className="grid h-[4961px] w-[3508px] grid-cols-1 grid-rows-1">
            <svg
              className="col-start-1 row-start-1 block h-[4961px] w-[3508px] font-['Liberation_Sans',Arial,sans-serif]"
              viewBox={`0 0 ${vbW} ${vbH}`}
              preserveAspectRatio="xMinYMin meet"
            >
              <Leaders items={bLabels} hubs={bHubs} />
              <Edges edges={bEdges} w={1.1} />
              <Dots dots={bDots} r={1.6} />
              <Labels items={bLabels} size={7.9} />
              <Scale tx={396.3} ty={719.4} x1={449.7} x2={484.6} y={720.4} />
            </svg>
            <div className="col-start-1 row-start-1 flex flex-col items-start pl-[116px] pt-[81px]">
              <h1 className="text-[107px] leading-none font-normal">A. Family 9308</h1>
              <div className="ml-[547px] mt-[685px] flex gap-[5px]">
                <Domain label="ACLA (PROK)" />
                <Domain label="ACLB (PROK)" wide />
              </div>
              <h2 className="ml-[2px] mt-[1106px] text-[107px] leading-none font-normal">B. ACLA component</h2>
            </div>
          </div>

          {/* right column: family tree, ACLB tree */}
          <div className="grid h-[4961px] w-[3508px] grid-cols-1 grid-rows-1">
            <svg
              className="col-start-1 row-start-1 block h-[4961px] w-[3508px] overflow-visible font-['Liberation_Sans',Arial,sans-serif]"
              viewBox={`784 0 ${vbW} ${vbH}`}
              preserveAspectRatio="xMinYMin meet"
            >
              <Edges edges={topEdges} w={0.7} ink="#333" />
              <Labels items={topLabels} size={12.7} italic />
              <g fontSize={12} fill="#000">
                {boot.map(([t, x, y, a], i) => (
                  <text key={i} transform={`translate(${x} ${y}) rotate(${a})`} textAnchor="middle" dominantBaseline="central">
                    {t}
                  </text>
                ))}
              </g>
              <Scale tx={1243} ty={420.7} x1={1178.6} x2={1310.1} y={435} />

              <Leaders items={cLabels} hubs={cHubs} />
              <Edges edges={cEdges} w={0.75} />
              <Dots dots={cDots} r={1.5} />
              <Labels items={cLabels} size={5.9} />
              <Scale tx={1157} ty={712} x1={1209} x2={1271.3} y={713.3} />
            </svg>
            <div className="col-start-1 row-start-1 pl-[166px] pt-[2252px]">
              <h2 className="text-[107px] leading-none font-normal">C. ACLB component</h2>
            </div>
          </div>
        </div>
      </div>
    </div>
  );
}
